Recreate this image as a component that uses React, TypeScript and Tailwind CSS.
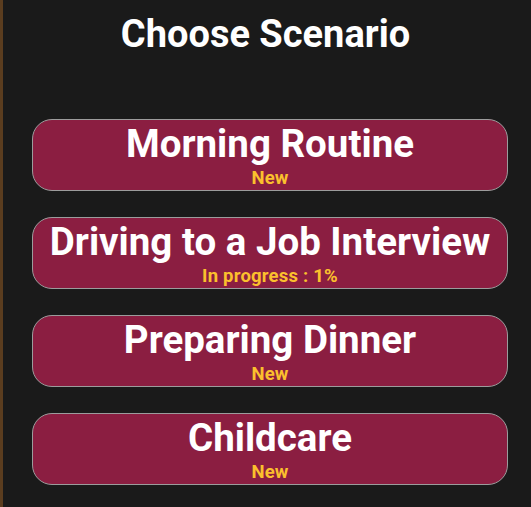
import React from 'react'

type Scenario = {
  title: string
  status: string
}

const scenarios: Scenario[] = [
  { title: 'Morning Routine', status: 'New' },
  { title: 'Driving to a Job Interview', status: 'In progress : 1%' },
  { title: 'Preparing Dinner', status: 'New' },
  { title: 'Childcare', status: 'New' }
]

function ScenarioButton({ title, status }: Scenario) {
  return (
    <button className="w-[476px] h-[72px] flex flex-col items-center pt-[4px] rounded-[20px] border border-[#9c9c9c] bg-[#8b1e41] cursor-pointer">
      <span className="text-[38.5px] leading-[40px] font-bold text-white whitespace-nowrap">{title}</span>
      <span className="mt-[5px] text-[18.5px] leading-[18px] font-bold text-[#fbc02d] tracking-[0.2px]">{status}</span>
    </button>
  )
}

export default function App() {
  return (
    <div
      className="w-[531px] h-[507px] flex bg-[#1a1a1a] overflow-hidden"
      style={{ fontFamily: 'Roboto, "Liberation Sans", sans-serif' }}
    >
      <div className="w-[3px] h-full bg-[#5b3d1f] shrink-0" />
      <main className="flex-1 flex flex-col">
        <h1 className="-ml-[3px] pt-[14px] text-center text-[38px] leading-[40px] font-bold text-white">
          Choose Scenario
        </h1>
        <div className="mt-[65px] ml-[29px] flex flex-col gap-[26px]">
          {scenarios.map((s) => (
            <ScenarioButton key={s.title} {...s} />
          ))}
        </div>
      </main>
    </div>
  )
}
